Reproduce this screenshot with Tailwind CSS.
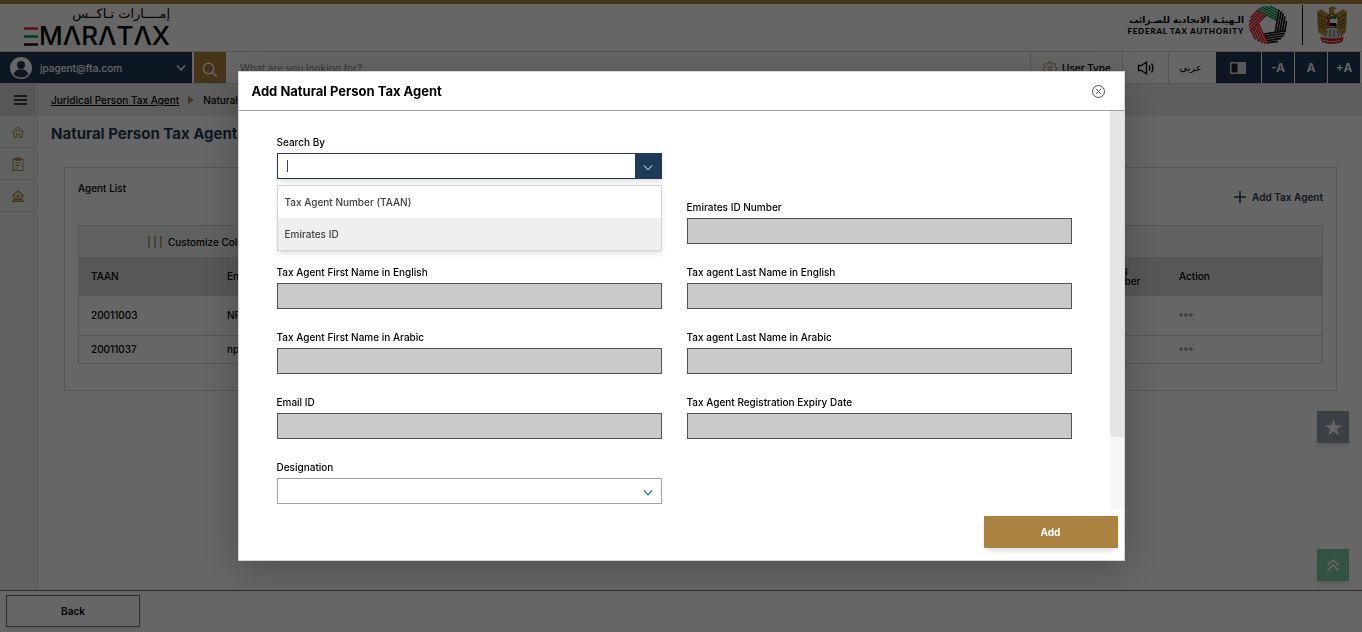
<!DOCTYPE html>
<html lang="en">

<head>
    <meta charset="utf-8" />
    <meta name="viewport" content="width=device-width, initial-scale=1" />
    <title>EmaraTax - Add Natural Person Tax Agent</title>
    <script src="https://cdn.jsdelivr.net/npm/@tailwindcss/browser@4"></script>
</head>

<body class="h-screen overflow-hidden bg-white font-['Inter','DejaVu_Sans',sans-serif] text-[10px] leading-4 font-medium text-black">
    <div class="flex h-full flex-col">
        <!-- Header -->
        <header class="flex h-[52px] shrink-0 items-start justify-between border-t-4 border-b border-t-[#b08440] border-b-neutral-300 pr-[15px] pl-6">
            <div class="flex flex-col items-end">
                <span lang="ar" dir="rtl" class="font-['DejaVu_Sans',sans-serif] text-[13px] leading-5 font-normal">إمــــارات تـاكــس</span>
                <div class="flex items-center gap-px" aria-label="EMARATAX">
                    <svg class="h-[19px] w-[14px]" viewBox="0 0 14 19">
                        <path d="M0 1.5h14" stroke="#e01f2d" stroke-width="2.5" />
                        <path d="M0 9.5h14" stroke="#0a9148" stroke-width="2.5" />
                        <path d="M0 17.5h14" stroke="#111" stroke-width="2.5" />
                    </svg>
                    <span class="text-[26px] leading-6 font-medium">MΛRΛTΛX</span>
                </div>
            </div>
            <div class="flex items-center pt-px">
                <div class="flex flex-col items-end pr-1">
                    <span lang="ar" dir="rtl" class="font-['DejaVu_Sans',sans-serif] text-[9px] leading-3 font-bold">الـهيئـة الاتحادية للضـرائب</span>
                    <span class="font-['Lato',sans-serif] text-[8px] leading-[10px] font-black tracking-widest">FEDERAL TAX AUTHORITY</span>
                </div>
                <svg class="h-10 w-10" viewBox="0 0 40 40" fill="none" stroke-width="1.700">
                    <defs>
                        <path id="blade" d="M12.600 2.500H22.500M8.600 4.800H23.300M6 7.100H24M4.200 9.400H24.800M3 11.700H25.500" />
                    </defs>
                    <use href="#blade" stroke="#0a9148" transform="rotate(28 20 20)" />
                    <use href="#blade" stroke="#111" transform="rotate(100 20 20)" />
                    <use href="#blade" stroke="#111" transform="rotate(172 20 20)" />
                    <use href="#blade" stroke="#e01f2d" transform="rotate(244 20 20)" />
                    <use href="#blade" stroke="#e01f2d" transform="rotate(316 20 20)" />
                </svg>
                <div class="mx-[14px] h-10 w-px bg-black"></div>
                <svg class="h-10 w-[30px]" viewBox="2 0 30 40" preserveAspectRatio="none">
                    <path d="M14 3q2-3 6-1l2 3-3-1 1 5q5-3 8-5l4 3-1 20-4 4 1 5H7l1-5-5-4L2 7l4-3q3 3 8 5z" fill="#b58a35" />
                    <path d="M3 9l8 5M3 13l7 4M3 17l7 3M4 21l7 2M31 9l-8 5M31 13l-7 4M31 17l-7 3M30 21l-7 2" stroke="#5e4312" />
                    <path d="M13 23l-6 10h20l-6-10z" fill="#d3d3d3" />
                    <path d="M12 26l-2 6M15 25v7M19 25v7M22 26l2 6" stroke="#555" />
                    <circle cx="17" cy="16" r="6.500" fill="#fff" stroke="#7d5b1a" stroke-width="1.500" />
                    <path d="M14 11h7v3h-7z" fill="#0a9148" />
                    <path d="M14 18h7v3h-7z" fill="#111" />
                    <path d="M12 12h3v8h-3z" fill="#e01f2d" />
                    <path d="M5 32q12 4 24 0l-2 5q-10 4-20 0z" fill="#c92532" />
                    <path d="M8 35q9 3 18 0" stroke="#fff" stroke-dasharray="2 1" fill="none" />
                </svg>
            </div>
        </header>

        <!-- Toolbar -->
        <div class="flex h-8 shrink-0 border-b border-neutral-300 pr-[2px]">
            <button class="mr-[2px] flex w-48 items-center bg-[#1f3a58] pr-[6px] pl-[10px] text-white">
                <svg class="mr-2 h-[22px] w-[22px]" viewBox="0 0 22 22">
                    <circle cx="11" cy="11" r="11" fill="#fff" />
                    <circle cx="11" cy="8" r="4" fill="#1f3a58" />
                    <path d="M3.500 17q2-4 5-4.500h5q3 .5 5 4.500-3 3.500-7.500 3.500T3.500 17z" fill="#1f3a58" />
                </svg>
                jpagent@fta.com
                <svg class="ml-auto h-2 w-[10px]" viewBox="0 0 10 8" fill="none" stroke="currentColor" stroke-width="1.400">
                    <path d="M1 1.500l4 4.500 4-4.500" />
                </svg>
            </button>
            <button class="flex w-8 items-center justify-center bg-[#b08440] pt-1" aria-label="Search">
                <svg class="h-4 w-4" viewBox="0 0 16 16" fill="none" stroke="#fff" stroke-width="1.400">
                    <circle cx="6.500" cy="6.500" r="5.200" />
                    <path d="M10.500 10.500l4.500 4.500" />
                </svg>
            </button>
            <input class="min-w-0 flex-1 px-[14px] placeholder:text-neutral-400" type="text" aria-label="Search the portal" placeholder="What are you looking for?" />
            <button class="flex w-[92px] items-center gap-[5px] border-l border-neutral-300 pl-3">
                <svg class="h-[14px] w-[14px]" viewBox="0 0 14 14" fill="none" stroke="#b08440">
                    <path d="M5.900 1h2.200l.4 1.700 1.200.5 1.500-.9 1.500 1.500-.9 1.500.5 1.200 1.200.4v1.900l-1.200.4-.5 1.200.9 1.500-1.500 1.500-1.500-.9-1.200.5-.4 1.200H5.900l-.4-1.200-1.200-.5-1.500.9-1.500-1.500.9-1.500-.5-1.200L.5 8.800V6.900l1.200-.4.5-1.200-.9-1.500 1.500-1.500 1.500.9 1.200-.5z" stroke-width=".9" />
                    <circle cx="7" cy="7.500" r="2" />
                </svg>
                User Type
            </button>
            <button class="flex w-[46px] items-center justify-center border-l border-neutral-300" aria-label="Listen">
                <svg class="h-4 w-[18px]" viewBox="0 0 18 16" fill="none" stroke="#111" stroke-width="1.400">
                    <path d="M1.500 5.500v5h3l5 3.500V2l-5 3.500zM12 5.500q1.800 2.500 0 5M14.500 3.500q3 4.500 0 9" />
                </svg>
            </button>
            <button lang="ar" class="w-12 border-l border-neutral-300 pr-1 font-['DejaVu_Sans',sans-serif] text-[10px]">عربي</button>
            <button class="mr-px flex w-[45px] items-center justify-center bg-[#1f3a58] pr-[2px]" aria-label="Contrast">
                <svg class="h-3 w-4" viewBox="0 0 16 12">
                    <path d="M0 0h16v12H0z" fill="#ddd" />
                    <path d="M1.500 1.500h6v9h-6z" fill="#222" />
                </svg>
            </button>
            <div class="flex gap-px text-xs font-semibold text-white">
                <button class="w-8 bg-[#1f3a58]">-A</button>
                <button class="w-8 bg-[#1f3a58]">A</button>
                <button class="w-8 bg-[#1f3a58]">+A</button>
            </div>
        </div>

        <div class="flex min-h-0 flex-1">
            <!-- Side menu -->
            <nav class="flex w-[38px] shrink-0 flex-col border-r border-neutral-200 bg-[#f0f6f4] pr-px">
                <button class="flex h-8 items-center justify-center bg-[#dadada] pl-1" aria-label="Menu">
                    <svg class="h-[10px] w-[13px]" viewBox="0 0 13 10" stroke="#111" stroke-width="1.400">
                        <path d="M0 1h13M0 5h13M0 9h13" />
                    </svg>
                </button>
                <a href="#" class="flex h-8 items-center justify-center border-b border-neutral-300" aria-label="Home">
                    <svg class="h-3 w-[14px]" viewBox="0 0 14 12" fill="none" stroke="#b08440">
                        <path d="M1 6.500L7 1l6 5.500M3 6v5.500h2.500V8h3v3.500H11V6M4.500 6L7 3.500 9.500 6" />
                    </svg>
                </a>
                <a href="#" class="flex h-8 items-center justify-center border-b border-neutral-300" aria-label="Forms">
                    <svg class="h-[14px] w-3" viewBox="0 0 12 14" fill="none" stroke="#b08440">
                        <path d="M1 2h10v11.500H1zM3.500 6h5M3.500 8.500h5M3.500 11h3" />
                        <path d="M3.500 1h5v2.500h-5z" fill="#b08440" />
                    </svg>
                </a>
                <a href="#" class="flex h-8 items-center justify-center border-b border-neutral-300" aria-label="Authority">
                    <svg class="h-3 w-[14px]" viewBox="0 0 14 12" fill="none" stroke="#b08440">
                        <path d="M1 6L7 1l6 5M3 5v4.500h8V5" stroke-width="1.200" />
                        <path d="M5 9V6h4v3M7 3.500V9" />
                        <path d="M1 11.200h12" stroke-width="1.600" />
                    </svg>
                </a>
            </nav>

            <main class="relative min-w-0 flex-1">
                <div class="flex h-8 items-center gap-2 bg-[#ececec] px-[13px]">
                    <a href="#" class="underline">Juridical Person Tax Agent</a>
                    <svg class="h-2 w-2" viewBox="0 0 8 8">
                        <path d="M1 0l6 4-6 4z" fill="#b08440" />
                    </svg>
                    <span>Natural Person Tax Agent</span>
                </div>
                <h1 class="px-[13px] pt-2 text-[15px] leading-5 font-bold text-[#1f3a58]">Natural Person Tax Agent</h1>

                <section class="mt-[23px] mr-[25px] ml-[26px] border border-neutral-300 px-[13px] pb-[26px]">
                    <div class="flex h-[57px] items-start justify-between pt-3">
                        <h2>Agent List</h2>
                        <button class="mt-[9px] flex items-center gap-[6px] font-semibold text-[#1f3a58]">
                            <svg class="h-3 w-3" viewBox="0 0 12 12" stroke="currentColor" stroke-width="1.400">
                                <path d="M6 0v12M0 6h12" />
                            </svg>
                            Add Tax Agent
                        </button>
                    </div>
                    <div class="border border-neutral-300">
                        <div class="flex h-8 items-center border-b border-neutral-300 bg-[#f0f6f4] pl-[69px]">
                            <button class="flex items-center gap-[6px]">
                                <svg class="h-3 w-[14px]" viewBox="0 0 14 12" stroke="#b08440" stroke-width="1.400">
                                    <path d="M1 0v12M7 0v12M13 0v12" />
                                </svg>
                                Customize Columns
                            </button>
                        </div>
                        <table class="w-full table-fixed text-left leading-[11px]">
                            <thead class="bg-[#dadada]">
                                <tr class="h-[37px] border-b border-slate-300">
                                    <th class="w-[136px] pl-3 font-medium">TAAN</th>
                                    <th class="pl-3 font-medium">English Name</th>
                                    <th class="w-[78px] pl-[13px] font-medium">Filing Number</th>
                                    <th class="w-[155px] pl-3 font-medium">Action</th>
                                </tr>
                            </thead>
                            <tbody>
                                <tr class="h-10 border-b border-neutral-300">
                                    <td class="pl-3">20011003</td>
                                    <td class="pl-3">NPAgent</td>
                                    <td></td>
                                    <td class="pl-3">
                                        <button class="block" aria-label="Actions for 20011003">
                                            <svg class="h-1 w-[14px]" viewBox="0 0 14 4" fill="none" stroke="#6b7c90">
                                                <circle cx="2" cy="2" r="1.300" /><circle cx="7" cy="2" r="1.300" /><circle cx="12" cy="2" r="1.300" />
                                            </svg>
                                        </button>
                                    </td>
                                </tr>
                                <tr class="h-7">
                                    <td class="pl-3">20011037</td>
                                    <td class="pl-3">npagent</td>
                                    <td></td>
                                    <td class="pl-3">
                                        <button class="block" aria-label="Actions for 20011037">
                                            <svg class="h-1 w-[14px]" viewBox="0 0 14 4" fill="none" stroke="#6b7c90">
                                                <circle cx="2" cy="2" r="1.300" /><circle cx="7" cy="2" r="1.300" /><circle cx="12" cy="2" r="1.300" />
                                            </svg>
                                        </button>
                                    </td>
                                </tr>
                            </tbody>
                        </table>
                    </div>
                </section>

                <!-- Floating buttons -->
                <div class="absolute right-[13px] bottom-[9px] flex flex-col gap-[106px]">
                    <button class="flex h-8 w-8 items-center justify-center bg-[#94a0b2] shadow-md" aria-label="Favourites">
                        <svg class="h-[17px] w-[17px]" viewBox="0 0 17 17" fill="#fff">
                            <path d="M8.500 0l2 6.300H17l-5.200 3.900 2 6.300-5.300-3.900-5.300 3.900 2-6.300L0 6.300h6.500z" />
                        </svg>
                    </button>
                    <button class="flex h-8 w-8 items-center justify-center bg-[#83cda5] shadow-md" aria-label="Back to top">
                        <svg class="h-3 w-3" viewBox="0 0 12 12" fill="none" stroke="#fff" stroke-width="1.600">
                            <path d="M.5 6.500L6 1l5.500 5.500M.5 11.500L6 6l5.500 5.500" />
                        </svg>
                    </button>
                </div>
            </main>
        </div>

        <footer class="h-[42px] shrink-0 border-t border-neutral-500 px-[6px] pt-1">
            <button class="h-8 w-[134px] border border-neutral-500 font-semibold shadow-sm">Back</button>
        </footer>
    </div>

    <!-- Dialog -->
    <div class="fixed inset-0 flex items-center justify-center bg-black/60">
        <div role="dialog" aria-modal="true" aria-labelledby="dialog-title" class="flex h-[490px] w-full max-w-[887px] flex-col border border-neutral-300 bg-white shadow-[0_8px_40px_rgba(0,0,0,0.25)]">
            <div class="flex h-[39px] shrink-0 items-center justify-between border-b border-neutral-400 pr-[19px] pl-[13px]">
                <h2 id="dialog-title" class="text-[13px] font-bold">Add Natural Person Tax Agent</h2>
                <button aria-label="Close">
                    <svg class="h-[13px] w-[13px]" viewBox="0 0 13 13" fill="none" stroke="#555">
                        <circle cx="6.500" cy="6.500" r="6" />
                        <path d="M3.800 3.800l5.400 5.400M9.200 3.800l-5.400 5.400" />
                    </svg>
                </button>
            </div>

            <div class="flex min-h-0 flex-1">
                <form class="grid flex-1 auto-rows-min grid-cols-2 gap-x-[25px] gap-y-5 overflow-hidden px-[38px] pt-[23px]">
                    <div class="relative col-start-1">
                        <label for="search-by" class="mb-[3px] block">Search By</label>
                        <div class="flex h-[26px] border border-[#1f3a58] shadow-md">
                            <input id="search-by" type="text" role="combobox" aria-expanded="true" aria-controls="search-by-list" class="min-w-0 flex-1 px-2 outline-none" />
                            <button type="button" class="flex w-[26px] items-center justify-center bg-[#1f3a58] pt-1 text-white" aria-label="Show options">
                                <svg class="h-[6px] w-[10px]" viewBox="0 0 10 6" fill="none" stroke="currentColor">
                                    <path d="M1 .5l4 4.300L9 .5" />
                                </svg>
                            </button>
                        </div>
                        <div class="absolute bottom-[7px] left-[10px] h-3 w-px bg-neutral-700"></div>
                        <ul id="search-by-list" role="listbox" class="absolute inset-x-0 top-full z-10 mt-[6px] border border-neutral-300 bg-white text-neutral-700 shadow-md">
                            <li role="option" class="px-[7px] py-2">Tax Agent Number (TAAN)</li>
                            <li role="option" class="bg-[#efefef] px-[7px] py-2">Emirates ID</li>
                        </ul>
                    </div>
                    <div class="col-start-1">
                        <label for="taan" class="mb-[3px] block">TAAN</label>
                        <input id="taan" type="text" disabled class="block h-[26px] w-full border border-neutral-600 bg-[#cacaca] px-2" />
                    </div>
                    <div>
                        <label for="eid" class="mb-[3px] block">Emirates ID Number</label>
                        <input id="eid" type="text" disabled class="block h-[26px] w-full border border-neutral-600 bg-[#cacaca] px-2" />
                    </div>
                    <div>
                        <label for="first-en" class="mb-[3px] block">Tax Agent First Name in English</label>
                        <input id="first-en" type="text" disabled class="block h-[26px] w-full border border-neutral-600 bg-[#cacaca] px-2" />
                    </div>
                    <div>
                        <label for="last-en" class="mb-[3px] block">Tax agent Last Name in English</label>
                        <input id="last-en" type="text" disabled class="block h-[26px] w-full border border-neutral-600 bg-[#cacaca] px-2" />
                    </div>
                    <div>
                        <label for="first-ar" class="mb-[3px] block">Tax Agent First Name in Arabic</label>
                        <input id="first-ar" type="text" disabled class="block h-[26px] w-full border border-neutral-600 bg-[#cacaca] px-2" />
                    </div>
                    <div>
                        <label for="last-ar" class="mb-[3px] block">Tax agent Last Name in Arabic</label>
                        <input id="last-ar" type="text" disabled class="block h-[26px] w-full border border-neutral-600 bg-[#cacaca] px-2" />
                    </div>
                    <div>
                        <label for="email" class="mb-[3px] block">Email ID</label>
                        <input id="email" type="text" disabled class="block h-[26px] w-full border border-neutral-600 bg-[#cacaca] px-2" />
                    </div>
                    <div>
                        <label for="expiry" class="mb-[3px] block">Tax Agent Registration Expiry Date</label>
                        <input id="expiry" type="text" disabled class="block h-[26px] w-full border border-neutral-600 bg-[#cacaca] px-2" />
                    </div>
                    <div class="relative">
                        <label for="designation" class="mb-[3px] block">Designation</label>
                        <select id="designation" class="block h-[26px] w-full appearance-none border border-neutral-400 bg-white px-2">
                            <option></option>
                        </select>
                        <svg class="pointer-events-none absolute right-[9px] bottom-2 h-[6px] w-[10px]" viewBox="0 0 10 6" fill="none" stroke="#1f6f8c" stroke-width="1.200">
                            <path d="M1 .5l4 4.300L9 .5" />
                        </svg>
                    </div>
                </form>
                <!-- Scroll track -->
                <div class="w-[14px] bg-[#f7f7f7]">
                    <div class="h-[82%] bg-[#e5e5e5]"></div>
                </div>
            </div>

            <div class="flex h-[51px] shrink-0 justify-end px-[6px] pt-[7px]">
                <button class="h-8 w-[134px] bg-[#ac8240] font-bold text-white shadow-md">Add</button>
            </div>
        </div>
    </div>
</body>

</html>
